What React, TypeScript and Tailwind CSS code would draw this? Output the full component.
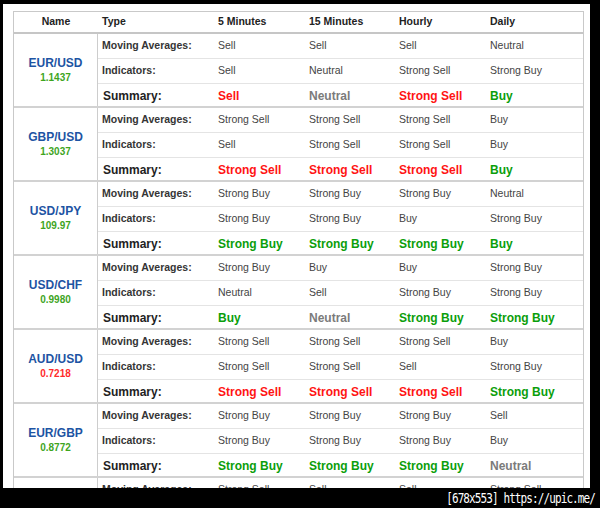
import React from "react";

type Sig = "Sell" | "Strong Sell" | "Buy" | "Strong Buy" | "Neutral";

interface Pair {
  name: string;
  price: string;
  up: boolean;
  ma: Sig[];
  ind: Sig[];
  sum: Sig[];
}

const pairs: Pair[] = [
  {
    name: "EUR/USD",
    price: "1.1437",
    up: true,
    ma: ["Sell", "Sell", "Sell", "Neutral"],
    ind: ["Sell", "Neutral", "Strong Sell", "Strong Buy"],
    sum: ["Sell", "Neutral", "Strong Sell", "Buy"],
  },
  {
    name: "GBP/USD",
    price: "1.3037",
    up: true,
    ma: ["Strong Sell", "Strong Sell", "Strong Sell", "Buy"],
    ind: ["Sell", "Strong Sell", "Strong Sell", "Buy"],
    sum: ["Strong Sell", "Strong Sell", "Strong Sell", "Buy"],
  },
  {
    name: "USD/JPY",
    price: "109.97",
    up: true,
    ma: ["Strong Buy", "Strong Buy", "Strong Buy", "Neutral"],
    ind: ["Strong Buy", "Strong Buy", "Buy", "Strong Buy"],
    sum: ["Strong Buy", "Strong Buy", "Strong Buy", "Buy"],
  },
  {
    name: "USD/CHF",
    price: "0.9980",
    up: true,
    ma: ["Strong Buy", "Buy", "Buy", "Strong Buy"],
    ind: ["Neutral", "Sell", "Strong Buy", "Strong Buy"],
    sum: ["Buy", "Neutral", "Strong Buy", "Strong Buy"],
  },
  {
    name: "AUD/USD",
    price: "0.7218",
    up: false,
    ma: ["Strong Sell", "Strong Sell", "Strong Sell", "Buy"],
    ind: ["Strong Sell", "Strong Sell", "Sell", "Strong Buy"],
    sum: ["Strong Sell", "Strong Sell", "Strong Sell", "Strong Buy"],
  },
  {
    name: "EUR/GBP",
    price: "0.8772",
    up: true,
    ma: ["Strong Buy", "Strong Buy", "Strong Buy", "Sell"],
    ind: ["Strong Buy", "Strong Buy", "Strong Buy", "Buy"],
    sum: ["Strong Buy", "Strong Buy", "Strong Buy", "Neutral"],
  },
  {
    name: "USD/CAD",
    price: "1.2950",
    up: true,
    ma: ["Strong Sell", "Sell", "Sell", "Strong Sell"],
    ind: ["Strong Sell", "Sell", "Sell", "Strong Sell"],
    sum: ["Strong Sell", "Sell", "Sell", "Strong Sell"],
  },
];

const sumColor = (s: Sig) => {
  if (s === "Sell" || s === "Strong Sell") return "text-[#ff1414]";
  if (s === "Buy" || s === "Strong Buy") return "text-[#0b9e0b]";
  return "text-[#7b7b7b]";
};

const cols = "grid grid-cols-[115px_91px_90px_91px_98px]";

function Group({ p }: { p: Pair }) {
  return (
    <div className="flex border-b-2 border-[#d2d2d2]">
      <div className="w-[84px] shrink-0 border-r border-[#cdcdcd] flex flex-col items-center justify-center pt-[1px]">
        <div className="text-[12px] font-bold leading-[15px] text-[#1d54a3]">{p.name}</div>
        <div
          className={
            "text-[10px] font-bold leading-[14px] " +
            (p.up ? "text-[#3ea51e]" : "text-[#ff2b2b]")
          }
        >
          {p.price}
        </div>
      </div>
      <div className="flex flex-col">
        <div className={cols + " h-[25px] border-b border-[#e4e4e4] items-center text-[10.5px]"}>
          <div className="pl-[4px] font-bold text-[#353535]">Moving Averages:</div>
          {p.ma.map((v, i) => (
            <div key={i} className="pl-[5px] text-[#444]">{v}</div>
          ))}
        </div>
        <div className={cols + " h-[25px] border-b border-[#e4e4e4] items-center text-[10.5px]"}>
          <div className="pl-[4px] font-bold text-[#353535]">Indicators:</div>
          {p.ind.map((v, i) => (
            <div key={i} className="pl-[5px] text-[#444]">{v}</div>
          ))}
        </div>
        <div className={cols + " h-[22px] items-center text-[12px] font-bold pt-[2px]"}>
          <div className="pl-[5px] text-[#222]">Summary:</div>
          {p.sum.map((v, i) => (
            <div key={i} className={"pl-[5px] " + sumColor(v)}>{v}</div>
          ))}
        </div>
      </div>
    </div>
  );
}

export default function App() {
  return (
    <div
      className="w-[600px] h-[508px] bg-black flex flex-col overflow-hidden"
      style={{ fontFamily: '"Liberation Sans", Arial, sans-serif' }}
    >
      <div className="ml-[3px] mt-[4px] w-[587px] h-[484px] shrink-0 bg-white overflow-hidden pt-[7px] pl-[10px]">
        <div className="w-[571px] border border-[#c9c9c9]">
          <div className="flex h-[22px] border-b-2 border-[#c6c6c6] items-center text-[10.5px] font-bold text-[#222]">
            <div className="w-[84px] shrink-0 text-center">Name</div>
            <div className={cols}>
              <div className="pl-[4px]">Type</div>
              <div className="pl-[5px]">5 Minutes</div>
              <div className="pl-[5px]">15 Minutes</div>
              <div className="pl-[5px]">Hourly</div>
              <div className="pl-[5px]">Daily</div>
            </div>
          </div>
          {pairs.map((p) => (
            <Group key={p.name} p={p} />
          ))}
        </div>
      </div>
      <div className="flex-1 flex items-center justify-end pr-[5px]">
        <span
          className="text-white text-[11px] leading-none tracking-[-0.9px] scale-y-[1.25] whitespace-pre"
          style={{ fontFamily: '"DejaVu Sans Mono", monospace' }}
        >
          [678x553] https://upic.me/
        </span>
      </div>
    </div>
  );
}
